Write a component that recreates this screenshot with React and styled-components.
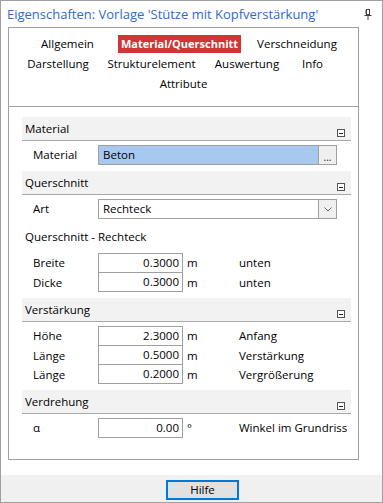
import React from 'react';
import styled, { createGlobalStyle } from 'styled-components';

const GlobalStyle = createGlobalStyle`
  html, body {
    margin: 0;
    padding: 0;
    background: #fff;
  }
  body {
    font-family: 'Open Sans', 'Noto Sans', sans-serif;
    font-size: 11.5px;
    color: #000;
  }
  * {
    box-sizing: border-box;
  }
`;

const Window = styled.div`
  width: 383px;
  height: 503px;
  border: 1px solid #a0a0a0;
  background: #fff;
  display: flex;
  flex-direction: column;
`;

const TitleBar = styled.div`
  height: 26px;
  flex: none;
  display: flex;
  align-items: center;
  justify-content: space-between;
  padding: 0 10px 0 6px;
`;

const Title = styled.div`
  color: #2f6ac6;
  font-size: 13px;
  line-height: 16px;
  white-space: nowrap;
`;

const Panel = styled.div`
  margin-left: 7px;
  width: 351px;
  height: 433px;
  flex: none;
  border: 1px solid #a0a0a0;
`;

const TabArea = styled.div`
  height: 79px;
  border-bottom: 1px solid #a0a0a0;
  padding-top: 7px;
`;

const TabRow = styled.div`
  display: grid;
  grid-template-columns: ${(p) => p.$cols};
  justify-content: ${(p) => (p.$center ? 'center' : 'start')};
  padding-left: ${(p) => p.$pad || 0}px;
  height: 20px;
`;

const Tab = styled.div`
  text-align: center;
  line-height: 18px;
  height: 18px;
  white-space: nowrap;
`;

const ActiveTab = styled.span`
  display: inline-block;
  background: #cf3535;
  color: #fff;
  font-weight: 700;
  font-size: 11px;
  padding: 0 3px;
`;

const Sections = styled.div`
  padding: 10px 7px 0 13px;
`;

const SectionHeader = styled.div`
  position: relative;
  height: 24px;
  background: #f2f2f2;
  border-bottom: 1px solid #a8a8a8;
  padding: 4px 0 0 3px;
  line-height: 16px;
`;

const Collapse = styled.span`
  position: absolute;
  right: 6px;
  bottom: 3px;
  width: 8px;
  height: 8px;
  border: 1px solid #555;
  background: #fff;
  &::after {
    content: '';
    position: absolute;
    left: 1px;
    right: 1px;
    top: 3px;
    height: 1px;
    background: #222;
  }
`;

const SectionBody = styled.div`
  padding: 4px 0 6px;
`;

const SubHeading = styled.div`
  padding: 10px 0 8px 3px;
  line-height: 16px;
`;

const FieldRow = styled.div`
  display: grid;
  grid-template-columns: ${(p) => (p.$wide ? '76px 239px' : '76px 85px 56px 1fr')};
  align-items: center;
  height: ${(p) => (p.$first ? 20 : 19)}px;
  line-height: 16px;
`;

const Label = styled.div`
  padding-left: 11px;
`;

const NumBox = styled.div`
  height: 100%;
  border: 1px solid #a0a0a0;
  border-top: ${(p) => (p.$first ? '1px solid #a0a0a0' : 'none')};
  display: flex;
  align-items: center;
  justify-content: flex-end;
  padding-right: 3px;
`;

const Unit = styled.div`
  padding-left: 4px;
`;

const WideBox = styled.div`
  height: 20px;
  border: 1px solid #a0a0a0;
  display: flex;
  background: #fff;
`;

const WideValue = styled.div`
  flex: 1;
  display: flex;
  align-items: center;
  padding-left: 4px;
  background: ${(p) => (p.$selected ? '#a7c9ef' : '#fff')};
`;

const SideButton = styled.div`
  width: 18px;
  border-left: 1px solid #a0a0a0;
  background: #efefef;
  display: flex;
  align-items: flex-end;
  justify-content: center;
  font-size: 10px;
  line-height: 14px;
  color: #222;
`;

const ChevronButton = styled(SideButton)`
  align-items: center;
`;

const Footer = styled.div`
  margin-top: auto;
  height: 27px;
  flex: none;
  background: #f0f0f0;
  padding: 5px 0 0 165px;
`;

const HelpButton = styled.div`
  width: 73px;
  height: 20px;
  border: 2px solid #0078d7;
  background: #e1e1e1;
  display: flex;
  align-items: center;
  justify-content: center;
  line-height: 16px;
`;

function PinIcon() {
  return (
    <svg width="8" height="11" viewBox="0 0 8 11">
      <rect x="2.5" y="0.5" width="3" height="5" fill="none" stroke="#444" />
      <line x1="2" y1="1" x2="2" y2="5" stroke="#444" />
      <line x1="0.5" y1="6.5" x2="7.5" y2="6.5" stroke="#444" />
      <line x1="4" y1="7" x2="4" y2="11" stroke="#444" />
    </svg>
  );
}

function Chevron() {
  return (
    <svg width="8" height="5" viewBox="0 0 8 5">
      <polyline points="0.5,0.5 4,4 7.5,0.5" fill="none" stroke="#666" />
    </svg>
  );
}

function Section({ title, children }) {
  return (
    <>
      <SectionHeader>
        {title}
        <Collapse />
      </SectionHeader>
      <SectionBody>{children}</SectionBody>
    </>
  );
}

function NumField({ label, value, unit = 'm', note, first }) {
  return (
    <FieldRow $first={first}>
      <Label>{label}</Label>
      <NumBox $first={first}>{value}</NumBox>
      <Unit>{unit}</Unit>
      <div>{note}</div>
    </FieldRow>
  );
}

export default function App() {
  return (
    <>
      <GlobalStyle />
      <Window>
        <TitleBar>
          <Title>Eigenschaften: Vorlage 'Stütze mit Kopfverstärkung'</Title>
          <PinIcon />
        </TitleBar>
        <Panel>
          <TabArea>
            <TabRow $cols="75px 149px 86px" $pad={21}>
              <Tab>Allgemein</Tab>
              <Tab>
                <ActiveTab>Material/Querschnitt</ActiveTab>
              </Tab>
              <Tab>Verschneidung</Tab>
            </TabRow>
            <TabRow $cols="76px 111px 80px 51px" $pad={11}>
              <Tab>Darstellung</Tab>
              <Tab>Strukturelement</Tab>
              <Tab>Auswertung</Tab>
              <Tab>Info</Tab>
            </TabRow>
            <TabRow $cols="86px" $center>
              <Tab>Attribute</Tab>
            </TabRow>
          </TabArea>
          <Sections>
            <Section title="Material">
              <FieldRow $wide $first>
                <Label>Material</Label>
                <WideBox>
                  <WideValue $selected>Beton</WideValue>
                  <SideButton>...</SideButton>
                </WideBox>
              </FieldRow>
            </Section>
            <Section title="Querschnitt">
              <FieldRow $wide $first>
                <Label>Art</Label>
                <WideBox>
                  <WideValue>Rechteck</WideValue>
                  <ChevronButton>
                    <Chevron />
                  </ChevronButton>
                </WideBox>
              </FieldRow>
              <SubHeading>Querschnitt - Rechteck</SubHeading>
              <NumField first label="Breite" value="0.3000" note="unten" />
              <NumField label="Dicke" value="0.3000" note="unten" />
            </Section>
            <Section title="Verstärkung">
              <NumField first label="Höhe" value="2.3000" note="Anfang" />
              <NumField label="Länge" value="0.5000" note="Verstärkung" />
              <NumField label="Länge" value="0.2000" note="Vergrößerung" />
            </Section>
            <Section title="Verdrehung">
              <NumField first label="α" value="0.00" unit="°" note="Winkel im Grundriss" />
            </Section>
          </Sections>
        </Panel>
        <Footer>
          <HelpButton>Hilfe</HelpButton>
        </Footer>
      </Window>
    </>
  );
}
